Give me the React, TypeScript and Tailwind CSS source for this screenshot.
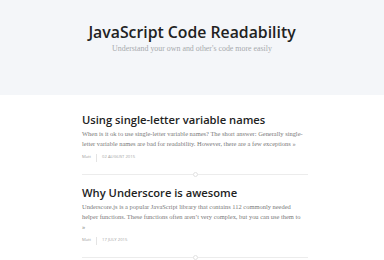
import React from 'react';

interface Post { title: string; lines: string[]; author: string; date: string }

// excerpt lines kept as in the reference's wrapping
const posts: Post[] = [
  {
    title: 'Using single-letter variable names',
    lines: [
      'When is it ok to use single-letter variable names? The short answer: Generally single-',
      'letter variable names are bad for readability. However, there are a few exceptions »',
    ],
    author: 'Matt',
    date: '02 AUGUST 2015',
  },
  {
    title: 'Why Underscore is awesome',
    lines: [
      'Underscore.js is a popular JavaScript library that contains 112 commonly needed',
      'helper functions. These functions often aren’t very complex, but you can use them to',
      '»',
    ],
    author: 'Matt',
    date: '17 JULY 2015',
  },
];

const sans = "font-['Open_Sans',sans-serif]";
const serif = "font-['Liberation_Serif',serif]";

function Divider() {
  return (
    <div className="relative h-[5px] flex items-center">
      <div className="h-px w-full bg-[#ececec]" />
      <div className="absolute left-[111px] top-0 w-[5px] h-[5px] rounded-full border border-[#e2e2e2] bg-white" />
    </div>
  );
}

export default function App() {
  return (
    <div className="w-[384px] h-[260px] overflow-hidden bg-white">
      <header className="h-[95px] bg-[#f4f6f9] flex flex-col items-center pt-[22px]">
        <h1 className={`${sans} text-[15.8px] leading-[20px] font-semibold text-[#222]`}>JavaScript Code Readability</h1>
        <p className={`${serif} text-[7.9px] leading-[10px] text-[#a7aaad] mt-[2px]`}>Understand your own and other's code more easily</p>
      </header>
      <main className="w-[230px] ml-[82px] pt-[18px]">
        {posts.map((p) => (
          <article key={p.title} className="mb-[9.5px]">
            <h2 className={`${sans} text-[11.2px] leading-[14px] font-semibold text-[#222]`}>{p.title}</h2>
            <p className={`${serif} text-[6.45px] leading-[10px] text-[#7a7a7a] mt-[2px] whitespace-nowrap`}>
              {p.lines.map((l, i) => (
                <span key={i} className="block">{l}</span>
              ))}
            </p>
            <div className={`${sans} flex items-center h-[8px] text-[4.2px] text-[#a3a3a3] mt-[4.5px] mb-[10px]`}>
              <span>{p.author}</span>
              <span className="mx-[5px] h-[8px] w-px bg-[#e4e4e4]" />
              <span>{p.date}</span>
            </div>
            <div className="w-[226px]">
              <Divider />
            </div>
          </article>
        ))}
      </main>
    </div>
  );
}
